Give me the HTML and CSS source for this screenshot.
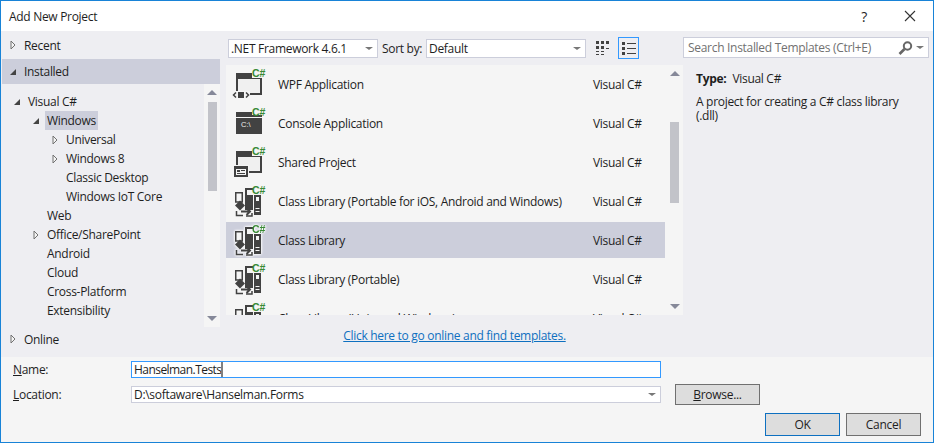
FILE: index.html
```html
<!DOCTYPE html>
<html lang="en">
<head>
    <meta charset="UTF-8">
    <meta name="viewport" content="width=device-width, initial-scale=1.0">
    <title>Add New Project</title>
    <link rel="stylesheet" href="styles.css">
</head>
<body>

    <svg class="defs" width="0" height="0">
        <symbol id="arrow-closed" viewBox="0 0 6 10"><path d="M1 1 L5 5 L1 9 Z" fill="#f5f5f5" stroke="#717171"/></symbol>
        <symbol id="arrow-open" viewBox="0 0 6 6"><path d="M6 0 V6 H0 Z" fill="#444"/></symbol>
        <symbol id="lib-icon" viewBox="0 0 32 32">
            <path d="M4.75 7.75 H11.25 V17 H4.75 Z" fill="#f5f5f5" stroke="#424242" stroke-width="1.5"/>
            <path d="M14 3 H22 V25 H14 Z" fill="#424242"/>
            <path d="M16 5 H22 V10 H16 Z" fill="#f5f5f5"/>
            <path d="M23 10 H30 V30 H23 Z" fill="#424242"/>
            <path d="M25 12 H28 V16 H25 Z" fill="#f5f5f5"/>
            <path d="M24.5 23.5 H28.5 M24.5 26.5 H28.5" stroke="#f5f5f5"/>
            <path d="M9 15.5 L14 20.5 L9 25.5 L4 20.5 Z" fill="#424242"/>
            <path d="M5.5 26 V30.5 H12 M21 28 V31 H15" fill="none" stroke="#424242" stroke-width="1.5"/>
            <path d="M10 26.5 H19 M15.5 23 L19 26.5 L15.5 30" fill="none" stroke="#424242" stroke-width="2"/>
        </symbol>
    </svg>

    <div class="dialog">
        <div class="titlebar">
            <span class="title">Add New Project</span>
            <span class="help">?</span>
            <svg class="close" width="12" height="12" viewBox="0 0 12 12"><path d="M1 1 L11 11 M11 1 L1 11" stroke="#333" stroke-width="1.1"/></svg>
        </div>

        <div class="main">
            <div class="nav">
                <div class="nav-head nav-recent"><svg class="arrow-top" width="6" height="10"><use href="#arrow-closed"/></svg>Recent</div>
                <div class="nav-head nav-installed"><svg class="arrow-top" width="6" height="6"><use href="#arrow-open"/></svg>Installed</div>
                <div class="tree-wrap">
                    <div class="tree">
                        <div class="tree-row level-1"><span class="slot"><svg width="6" height="6"><use href="#arrow-open"/></svg></span><span class="label">Visual C#</span></div>
                        <div class="tree-row level-2"><span class="slot"><svg width="6" height="6"><use href="#arrow-open"/></svg></span><span class="label label-selected">Windows</span></div>
                        <div class="tree-row level-3"><span class="slot"><svg width="6" height="10"><use href="#arrow-closed"/></svg></span><span class="label">Universal</span></div>
                        <div class="tree-row level-3"><span class="slot"><svg width="6" height="10"><use href="#arrow-closed"/></svg></span><span class="label">Windows 8</span></div>
                        <div class="tree-row level-3"><span class="slot"></span><span class="label">Classic Desktop</span></div>
                        <div class="tree-row level-3"><span class="slot"></span><span class="label">Windows IoT Core</span></div>
                        <div class="tree-row level-2"><span class="slot"></span><span class="label">Web</span></div>
                        <div class="tree-row level-2"><span class="slot"><svg width="6" height="10"><use href="#arrow-closed"/></svg></span><span class="label">Office/SharePoint</span></div>
                        <div class="tree-row level-2"><span class="slot"></span><span class="label">Android</span></div>
                        <div class="tree-row level-2"><span class="slot"></span><span class="label">Cloud</span></div>
                        <div class="tree-row level-2"><span class="slot"></span><span class="label">Cross-Platform</span></div>
                        <div class="tree-row level-2"><span class="slot"></span><span class="label">Extensibility</span></div>
                    </div>
                    <div class="scrollbar tree-scroll">
                        <span class="tri-up"></span>
                        <span class="thumb"></span>
                        <span class="tri-down"></span>
                    </div>
                </div>
                <div class="nav-head nav-online"><svg class="arrow-top" width="6" height="10"><use href="#arrow-closed"/></svg>Online</div>
            </div>

            <div class="center">
                <div class="toolbar">
                    <div class="combo combo-framework">.NET Framework 4.6.1<span class="combo-arrow"></span></div>
                    <span class="sort-label">Sort by:</span>
                    <div class="combo combo-sort">Default<span class="combo-arrow"></span></div>
                    <button class="view-btn view-grid">
                        <svg width="14" height="14" viewBox="0 0 14 14"><path d="M0 0h3v3H0zM5 0h3v3H5zM10 0h3v3h-3zM0 5h3v3H0zM5 5h3v3H5zM10 7h3v1h-3zM0 10h3v1H0zM5 10h3v1H5zM0 13h3v1H0zM5 13h3v1H5z" fill="#424242"/></svg>
                    </button>
                    <button class="view-btn view-list">
                        <svg width="14" height="13" viewBox="0 0 14 13"><path d="M0 0h3v3H0zM0 5h3v3H0zM0 10h3v3H0z" fill="#424242"/><path d="M5 1.5h9M5 6.5h9M5 11.5h9" stroke="#424242"/></svg>
                    </button>
                </div>
                <div class="list">
                    <div class="rows">
                        <div class="row">
                            <svg class="row-icon" width="32" height="32" viewBox="0 0 32 32">
                                <path d="M5 5 H21 V10 H31 V27 H5 Z" fill="#424242"/><path d="M7 11 H29 V25 H7 Z" fill="#f0f0f0"/>
                                <path d="M1 23 H19 V31 H1 Z" fill="#f5f5f5"/>
                                <path d="M5 24.5 L2.5 27 L5 29.5 M15 24.5 L17.5 27 L15 29.5" fill="none" stroke="#424242" stroke-width="1.5"/>
                                <path d="M7 24 H13 V30 H7 Z" fill="#424242"/>
                                <text class="cs" x="21" y="9">C#</text>
                            </svg>
                            <span class="row-name">WPF Application</span><span class="row-lang">Visual C#</span>
                        </div>
                        <div class="row">
                            <svg class="row-icon" width="32" height="32" viewBox="0 0 32 32">
                                <path d="M5 5 H21 V8 H31 V27 H5 Z" fill="#424242"/><path d="M5 10.5 H31" stroke="#f5f5f5"/>
                                <text class="console-text" x="10" y="20">C:\</text>
                                <text class="cs" x="21" y="9">C#</text>
                            </svg>
                            <span class="row-name">Console Application</span><span class="row-lang">Visual C#</span>
                        </div>
                        <div class="row">
                            <svg class="row-icon" width="32" height="32" viewBox="0 0 32 32">
                                <path d="M5 5 H21 V10 H31 V27 H5 Z" fill="#424242"/><path d="M7 11 H29 V25 H7 Z" fill="#f0f0f0"/>
                                <path d="M2 19 H18 V32 H2 Z" fill="#f5f5f5"/>
                                <path d="M3 20 H17 V31 H3 Z" fill="#424242"/><path d="M5 23 H15 V29 H5 Z" fill="#f5f5f5"/>
                                <path d="M6 24 H9 V26 H6 Z" fill="#424242"/><path d="M10 24.5h4M6 27.5h8" stroke="#424242"/>
                                <text class="cs" x="21" y="9">C#</text>
                            </svg>
                            <span class="row-name">Shared Project</span><span class="row-lang">Visual C#</span>
                        </div>
                        <div class="row">
                            <svg class="row-icon" width="32" height="32"><use href="#lib-icon"/><text class="cs" x="21" y="9">C#</text></svg>
                            <span class="row-name">Class Library (Portable for iOS, Android and Windows)</span><span class="row-lang">Visual C#</span>
                        </div>
                        <div class="row row-selected">
                            <svg class="row-icon" width="32" height="32"><use href="#lib-icon"/><text class="cs" x="21" y="9">C#</text></svg>
                            <span class="row-name">Class Library</span><span class="row-lang">Visual C#</span>
                        </div>
                        <div class="row">
                            <svg class="row-icon" width="32" height="32"><use href="#lib-icon"/><text class="cs" x="21" y="9">C#</text></svg>
                            <span class="row-name">Class Library (Portable)</span><span class="row-lang">Visual C#</span>
                        </div>
                        <div class="row">
                            <svg class="row-icon" width="32" height="32"><use href="#lib-icon"/><text class="cs" x="21" y="9">C#</text></svg>
                            <span class="row-name">Class Library (Universal Windows)</span><span class="row-lang">Visual C#</span>
                        </div>
                    </div>
                    <div class="scrollbar list-scroll">
                        <span class="tri-up"></span>
                        <span class="thumb"></span>
                        <span class="tri-down"></span>
                    </div>
                </div>
                <div class="online-link"><a href="#">Click here to go online and find templates.</a></div>
            </div>

            <div class="details">
                <div class="search">
                    <span class="search-text">Search Installed Templates (Ctrl+E)</span>
                    <svg width="15" height="14" viewBox="0 0 15 14"><circle cx="9.5" cy="5" r="3.7" fill="none" stroke="#666" stroke-width="2"/><path d="M6.5 8 L1.5 13" stroke="#666" stroke-width="2.6"/></svg>
                    <span class="combo-arrow search-arrow"></span>
                </div>
                <div class="info">
                    <p class="type"><strong>Type:</strong><span>Visual C#</span></p>
                    <p class="desc">A project for creating a C# class library (.dll)</p>
                </div>
            </div>
        </div>

        <div class="bottom">
            <div class="form-row row-name-field">
                <span class="form-label"><u>N</u>ame:</span>
                <div class="field field-active">Hanselman.Tests<span class="caret"></span></div>
            </div>
            <div class="form-row">
                <span class="form-label"><u>L</u>ocation:</span>
                <div class="field">D:\softaware\Hanselman.Forms<span class="combo-arrow"></span></div>
                <button class="btn btn-browse"><u>B</u>rowse...</button>
            </div>
            <div class="actions">
                <button class="btn btn-ok">OK</button>
                <button class="btn">Cancel</button>
            </div>
        </div>
    </div>

</body>
</html>
```

FILE: styles.css
```css
* {
    box-sizing: border-box;
}
html, body {
    margin: 0;
    padding: 0;
}
body {
    width: 934px;
    height: 443px;
    overflow: hidden;
    font-family: "Open Sans", "Noto Sans", sans-serif;
    font-size: 12px;
    letter-spacing: -0.3px;
    color: #1e1e1e;
}
.defs {
    position: absolute;
}
.dialog {
    width: 934px;
    height: 443px;
    border: 1px solid #1883d7;
    display: flex;
    flex-direction: column;
    background: #f5f5f5;
}
button {
    font: inherit;
    color: inherit;
    letter-spacing: inherit;
}

/* title bar */
.titlebar {
    height: 30px;
    flex: none;
    display: flex;
    align-items: center;
    background: #fff;
    padding-left: 8px;
}
.title {
    flex: 1;
}
.help {
    font-size: 14px;
    margin-right: 37px;
}
.close {
    margin-right: 17px;
}

/* main area */
.main {
    height: 326px;
    flex: none;
    display: flex;
    background: #eeeef2;
}
.nav {
    width: 219px;
    flex: none;
    padding-left: 1px;
}
.nav-head {
    display: flex;
    align-items: center;
    padding-left: 8px;
}
.arrow-top {
    margin-right: 8px;
}
.nav-recent {
    height: 28px;
}
.nav-installed {
    height: 25px;
    background: #ccceDb;
}
.nav-online {
    height: 24px;
}
.tree-wrap {
    height: 243px;
    display: flex;
}
.tree {
    flex: 1;
    padding-top: 8px;
}
.tree-row {
    height: 19px;
    display: flex;
    align-items: center;
}
.level-1 {
    padding-left: 12px;
}
.level-2 {
    padding-left: 31px;
}
.level-3 {
    padding-left: 50px;
}
.slot {
    width: 12px;
    display: flex;
    align-items: center;
    flex: none;
}
.label {
    padding: 0 2px;
    line-height: 19px;
}
.label-selected {
    background: #ccceDb;
}

/* scrollbars */
.scrollbar {
    width: 16px;
    flex: none;
    background: #f5f5f5;
    position: relative;
}
.thumb {
    position: absolute;
    left: 4px;
    width: 9px;
    background: #c2c3c9;
}
.tri-up, .tri-down {
    position: absolute;
    left: 3px;
    width: 0;
    height: 0;
    border-left: 5px solid transparent;
    border-right: 5px solid transparent;
}
.tri-up {
    top: 6px;
    border-bottom: 5px solid #868999;
}
.tri-down {
    bottom: 6px;
    border-top: 5px solid #868999;
}
.tree-scroll .thumb {
    top: 18px;
    height: 89px;
}
.list-scroll {
    width: 18px;
}
.list-scroll .thumb {
    top: 57px;
    height: 81px;
    left: 5px;
}
.list-scroll .tri-up, .list-scroll .tri-down {
    left: 5px;
}

/* centre column */
.center {
    width: 463px;
    flex: none;
}
.toolbar {
    height: 34px;
    display: flex;
    align-items: center;
    padding-left: 8px;
}
.combo {
    height: 19px;
    background: #fff;
    border: 1px solid #ccceDb;
    display: flex;
    align-items: center;
    justify-content: space-between;
    padding: 0 4px 0 2px;
}
.combo-framework {
    width: 150px;
}
.sort-label {
    margin: 0 4px;
    width: 40px;
    white-space: nowrap;
}
.combo-sort {
    width: 160px;
}
.combo-arrow {
    width: 0;
    height: 0;
    border-left: 4px solid transparent;
    border-right: 4px solid transparent;
    border-top: 3px solid #777;
}
.view-btn {
    padding: 0;
    background: none;
    border: 1px solid transparent;
    display: flex;
    align-items: center;
    justify-content: center;
    height: 22px;
}
.view-grid {
    width: 21px;
    margin-left: 6px;
    margin-right: 5px;
}
.view-list {
    width: 21px;
    border-color: #3399ff;
}

/* template list */
.list {
    height: 250px;
    margin-left: 6px;
    display: flex;
    background: #f5f5f5;
    overflow: hidden;
}
.rows {
    flex: 1;
    padding-top: 1px;
}
.row {
    height: 36px;
    margin-bottom: 3px;
    display: flex;
    align-items: center;
    padding-left: 5px;
}
.row-selected {
    background: #ccceDb;
}
.row-selected .row-icon {
    filter: drop-shadow(0 0 1px #fff) drop-shadow(0 0 1px #fff);
}
.row-icon {
    flex: none;
    overflow: visible;
}
.cs {
    font-family: "Liberation Sans", sans-serif;
    font-weight: bold;
    font-size: 10.5px;
    letter-spacing: 0;
    fill: #388a34;
}
.console-text {
    font-family: "Liberation Sans", sans-serif;
    font-size: 7.5px;
    letter-spacing: 0;
    fill: #f0f0f0;
}
.row-name {
    margin-left: 15px;
    width: 315px;
    white-space: nowrap;
}
.online-link {
    height: 42px;
    padding-top: 12px;
    text-align: center;
    padding-left: 6px;
}
.online-link a {
    color: #0e70c0;
    text-decoration: underline;
}

/* right column */
.details {
    flex: 1;
    min-width: 0;
}
.search {
    width: 246px;
    height: 21px;
    margin-top: 6px;
    background: #fff;
    border: 1px solid #ccceDb;
    display: flex;
    align-items: center;
    padding: 0 4px;
    color: #717171;
}
.search-text {
    flex: 1;
}
.search-arrow {
    margin-left: 3px;
}
.info {
    padding: 12px 13px 0 13px;
}
.info p {
    margin: 0;
}
.type strong {
    margin-right: 6px;
}
.desc {
    margin-top: 8px !important;
    line-height: 14px;
}

/* bottom form */
.bottom {
    flex: 1;
    padding: 4px 12px 0 12px;
}
.form-row {
    display: flex;
    align-items: center;
    height: 21px;
}
.row-name-field {
    height: 17px;
    margin-bottom: 6px;
}
.form-label {
    width: 118px;
    flex: none;
}
.field {
    width: 530px;
    height: 17px;
    flex: none;
    background: #fff;
    border: 1px solid #ccceDb;
    display: flex;
    align-items: center;
    padding: 0 4px 0 2px;
    white-space: nowrap;
}
.field .combo-arrow {
    margin-left: auto;
}
.field-active {
    border-color: #3399ff;
    letter-spacing: -0.55px;
}
.caret {
    width: 2px;
    height: 15px;
    background: #808080;
}
.btn {
    background: #dddddd;
    border: 1px solid #707070;
    padding: 0;
    width: 75px;
    height: 23px;
}
.btn-browse {
    width: 85px;
    height: 21px;
    margin-left: 14px;
}
.btn-ok {
    border-color: #0e70c0;
}
.actions {
    display: flex;
    justify-content: flex-end;
    gap: 6px;
    margin-top: 8px;
}
```
